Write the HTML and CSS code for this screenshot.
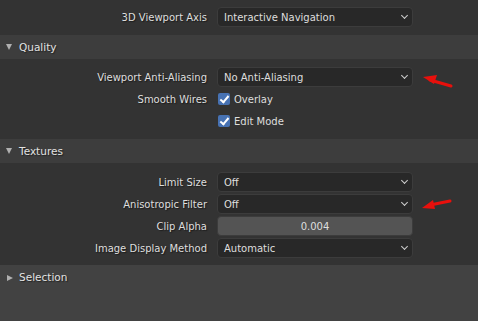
FILE: index.html
```html
<!DOCTYPE html>
<html lang="en">

<head>
    <meta charset="UTF-8">
    <title>Viewport Preferences</title>
    <link rel="stylesheet" href="styles.css">
</head>

<body>
    <div class="prefs">
        <!--top of the viewport section-->
        <div class="panel-body first">
            <div class="row">
                <span class="label">3D Viewport Axis</span>
                <div class="dropdown">Interactive Navigation<span class="chev"></span></div>
            </div>
        </div>

        <!--Quality-->
        <div class="panel-head"><span class="tri open"></span>Quality</div>
        <div class="panel-body">
            <div class="row">
                <span class="label">Viewport Anti-Aliasing</span>
                <div class="dropdown">No Anti-Aliasing<span class="chev"></span></div>
                <svg class="arrow" width="40" height="20" viewBox="0 0 40 20">
                    <path d="M31 15 L10 9" stroke="#e8100c" stroke-width="3" stroke-linecap="round" />
                    <polygon points="3,6 17,4 14,13" fill="#e8100c" />
                </svg>
            </div>
            <div class="row">
                <span class="label">Smooth Wires</span>
                <label class="check"><span class="box"></span>Overlay</label>
            </div>
            <div class="row">
                <span class="label"></span>
                <label class="check"><span class="box"></span>Edit Mode</label>
            </div>
        </div>

        <!--Textures-->
        <div class="panel-head"><span class="tri open"></span>Textures</div>
        <div class="panel-body tex">
            <div class="row">
                <span class="label">Limit Size</span>
                <div class="dropdown">Off<span class="chev"></span></div>
            </div>
            <div class="row">
                <span class="label">Anisotropic Filter</span>
                <div class="dropdown">Off<span class="chev"></span></div>
                <svg class="arrow" width="40" height="20" viewBox="0 0 40 20">
                    <path d="M30 3 L10 7" stroke="#e8100c" stroke-width="3" stroke-linecap="round" />
                    <polygon points="2,10 13,2 15,11" fill="#e8100c" />
                </svg>
            </div>
            <div class="row">
                <span class="label">Clip Alpha</span>
                <div class="slider">0.004</div>
            </div>
            <div class="row">
                <span class="label">Image Display Method</span>
                <div class="dropdown">Automatic<span class="chev"></span></div>
            </div>
        </div>

        <!--Selection (closed)-->
        <div class="panel-head last"><span class="tri"></span>Selection</div>
    </div>
</body>

</html>
```

FILE: styles.css
```css
body {
    margin: 0;
    padding: 0;
    background-color: #424242;
    font-family: "DejaVu Sans", sans-serif;
    font-size: 10px;
    color: #dedede;
}

.prefs {
    width: 478px;
    height: 321px;
    display: flex;
    flex-direction: column;
    background-color: #424242;
}

.panel-body {
    background-color: #333333;
    padding: 8px 0 8px 0;
    display: flex;
    flex-direction: column;
    gap: 2px;
}

.panel-body.first {
    padding: 7px 0 8px 0;
}

.panel-body.tex {
    padding: 9px 0 7px 0;
}

.panel-head {
    background-color: #3d3d3d;
    height: 24px;
    display: flex;
    align-items: center;
    font-size: 10.5px;
    color: #e2e2e2;
    text-shadow: 1px 1px 1px #222;
}

.panel-head.last {
    background-color: #424242;
    flex: 1;
    align-items: flex-start;
    padding-top: 6px;
}

.tri {
    width: 0;
    height: 0;
    margin: 0 7px 0 6px;
}

.tri.open {
    border-left: 3.5px solid transparent;
    border-right: 3.5px solid transparent;
    border-top: 6px solid #b0b0b0;
}

.tri:not(.open) {
    border-top: 3.5px solid transparent;
    border-bottom: 3.5px solid transparent;
    border-left: 6px solid #b0b0b0;
    margin: 4px 6px 0 7px;
}

.row {
    height: 20px;
    display: flex;
    align-items: center;
    position: relative;
}

.label {
    width: 217px;
    text-align: right;
    padding-right: 10px;
    box-sizing: border-box;
    text-shadow: 1px 1px 1px #1c1c1c;
}

.dropdown {
    width: 196px;
    height: 20px;
    box-sizing: border-box;
    background-color: #282828;
    border: 1px solid #3c3c3c;
    border-radius: 4px;
    padding-left: 6px;
    display: flex;
    align-items: center;
    position: relative;
}

.chev {
    position: absolute;
    right: 5px;
    top: 5px;
    width: 4px;
    height: 4px;
    border-right: 1.5px solid #cfcfcf;
    border-bottom: 1.5px solid #cfcfcf;
    transform: rotate(45deg);
}

.slider {
    width: 196px;
    height: 20px;
    box-sizing: border-box;
    background-color: #545454;
    border: 1px solid #3c3c3c;
    border-radius: 4px;
    display: flex;
    align-items: center;
    justify-content: center;
}

.check {
    display: flex;
    align-items: center;
    margin-left: 1px;
}

.box {
    width: 12px;
    height: 12px;
    border-radius: 2px;
    background-color: #4772b3;
    margin-right: 4px;
    position: relative;
}

.box::after {
    content: "";
    position: absolute;
    left: 4px;
    top: 1px;
    width: 3px;
    height: 7px;
    border-right: 2px solid #fff;
    border-bottom: 2px solid #fff;
    transform: rotate(40deg);
}

.arrow {
    position: absolute;
    left: 420px;
    top: 4px;
}
```
